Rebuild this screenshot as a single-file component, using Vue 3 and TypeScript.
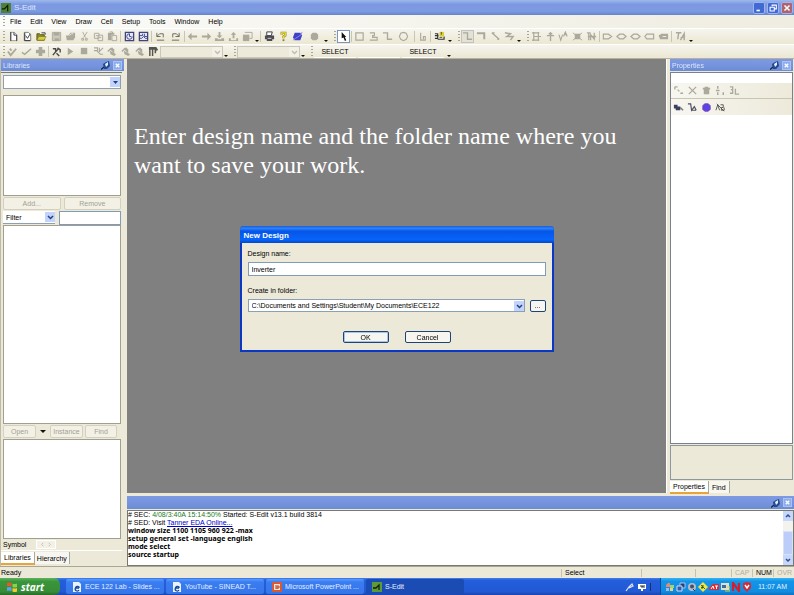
<script setup lang="ts">
import { ref } from 'vue'

type Shape = { d: string; f?: string; s?: string; w?: number }
type Part =
  | { kind: 'icons'; width: number; names: string[] }
  | { kind: 'sep' | 'grip' | 'more'; width: number }
  | { kind: 'combo'; width: number; label: string }
  | { kind: 'text'; width: number; text: string }

const g = '#aaa99b'
const k = '#33333f'
const y = '#d8cf3c'
const b = '#3f3fc8'

const icons: Record<string, Shape[]> = {
  newFile: [{ d: 'M3 1.5H7L9.5 4V10.500H3Z', f: '#fff', s: '#99998c' }, { d: 'M3 1V11M6.500 1.500V4.500H9.500V11', s: k }],
  newCell: [{ d: 'M2.500 1.500H7L9.500 4V10.500H2.500Z', f: '#fff', s: '#77776c' }, { d: 'M3 2V10.500H9M4 5L6 8L9 3', s: k }],
  open: [{ d: 'M1 3H4L5 4H9V10H1Z', f: '#8f8a2b', s: '#55531d' }, { d: 'M3 6H11L9 10H1Z', f: y, s: '#6f6b22', w: 0.6 }, { d: 'M6 2H10V4', s: k }],
  save: [{ d: 'M1.500 1.500H10.500V10.500H1.500Z', f: '#c9c8b9', s: g }, { d: 'M3 2H9V5H3ZM4 8H9V11H4Z', f: g }],
  saveAll: [{ d: 'M1 5H4L6 2H11V7L9 10H2Z', f: g }, { d: 'M5 5L7 3H9', s: '#eee' }],
  cut: [{ d: 'M4 1L7 7M9 1L5 7M3 8H5V10H3ZM7 8H9V10H7Z', s: g }],
  copy: [{ d: 'M1.500 2.500H6.500V8H1.500ZM5.500 4.500H10.500V10.500H5.500Z', s: g }, { d: 'M3 5H5M7 7H9', s: g }],
  paste: [{ d: 'M1 2H8V4H5V10H1Z', f: g }, { d: 'M5.500 5H10.500V10.500H5.500ZM3 1H6V3', s: g }],
  design: [{ d: 'M1.500 1.500H10.500V10.500H1.500Z', f: '#e5e8ff', s: '#414579', w: 1.4 }, { d: 'M6 3A3 3 0 1 0 9 6M6 3V6H8', s: '#414579' }],
  schem: [{ d: 'M1.500 1.500H10.500V10.500H1.500Z', f: '#e5e8ff', s: '#414579', w: 1.400 }, { d: 'M2 5H5V3M7 3V6H10M2 8H4L6 6L8 8H10', s: '#414579' }],
  undo: [{ d: 'M2 2V6H6M2 6L5 3H9V7M2 10H10', s: '#666653' }],
  redo: [{ d: 'M10 2V6H6M10 6L7 3H3V7M2 10H10', s: '#666653' }],
  left: [{ d: 'M1 6L5 2V5H11V7H5V10Z', f: g }],
  right: [{ d: 'M11 6L7 2V5H1V7H7V10Z', f: g }],
  push: [{ d: 'M5 1H7V5H9L6 8L3 5H5ZM1 8H4V9H8V8H11V11H1Z', f: g }],
  pop: [{ d: 'M6 1L9 4H7V8H5V4H3ZM1 8H3V10H9V8H11V11H1Z', f: g }],
  view: [{ d: 'M3 1.500H11V8H8', s: g }, { d: 'M1 4H8V11H1Z', f: g }],
  print: [{ d: 'M3 1H9L8 5H3Z', f: '#fff', s: k }, { d: 'M1 5H11V9H9V11H3V9H1Z', f: '#4b4b50' }, { d: 'M4 8H8', s: '#ddd' }],
  help: [{ d: 'M4 4V2H8V5L6 6V8', s: '#8a8322', w: 2.400 }, { d: 'M4 4V2H8V5L6 6V8', s: '#e9df38', w: 1.300 }, { d: 'M5 9H7V11H5Z', f: '#8a8322' }],
  planet: [{ d: 'M3 2H9L11 5L9 10H3L1 7Z', f: b }, { d: 'M1 10L4 8L10 4L11 1', s: '#8f90e8' }],
  dot: [{ d: 'M4 2H8L10 4V8L8 10H4L2 8V4Z', f: g }],
  arrow: [{ d: 'M4 1V8L6 7L7.500 11L9 10L7.500 6.500H9Z', f: '#111' }],
  box: [{ d: 'M2 2H10V10H2Z', s: g, w: 1.300 }],
  poly: [{ d: 'M2 2H7V5H5V7H10V10H2', s: g, w: 1.200 }],
  wire: [{ d: 'M1 2H6V9H11', s: g, w: 1.500 }],
  circle: [{ d: 'M6 1.500L9 2.500L10.500 6L9 9L6 10.500L3 9L1.500 6L3 2.500Z', s: g, w: 1.200 }],
  label: [{ d: 'M4 2V10H9V6H7V9', s: g, w: 1.200 }],
  move: [{ d: 'M1 3H4V8H1M1 5H5M4 9H11V6', s: k, w: 1.300 }, { d: 'M6 1H11V6H6Z', f: y }, { d: 'M8 1V4M6 7H9', s: '#50501d' }],
  wireBold: [{ d: 'M1 2.500H9V9', s: g, w: 2.200 }],
  diag: [{ d: 'M2 2L10 9M2 2H5M8 9H10', s: g, w: 1.500 }],
  zig: [{ d: 'M1 2L7 3L3 6H10L7 10', s: g, w: 1.600 }],
  net: [{ d: 'M3 1V11M8 1V11M1 2H9M1 10H9M3 6H11', s: g, w: 1.300 }],
  pin: [{ d: 'M6 1V11M2 5H10M4 3H8', s: g, w: 1.500 }],
  va: [{ d: 'M1 4L3 10L5 4M6 6L8 1L10 6M7 4H10', s: g, w: 1.200 }],
  spark: [{ d: 'M3 3H9V9H3Z', f: g }, { d: 'M1 2L11 10M11 2L1 10', s: g }],
  text: [{ d: 'M1 2H5M3 2V10M5 10V4L9 9V2M2 6H11', s: g, w: 1.400 }],
  portIn: [{ d: 'M1.500 3.500H7L10.500 6L7 8.500H1.500Z', s: g, w: 1.300 }],
  portDia: [{ d: 'M1 6L4 3.500H8L11 6L8 8.500H4Z', s: g, w: 1.300 }],
  portOut: [{ d: 'M3 3.500H10.500V8.500H3L1 6Z', s: g, w: 1.300 }],
  portFull: [{ d: 'M1 4H3V3H11V9H2V7H1Z', f: g }, { d: 'M5 6H9', s: '#eee' }],
  ta: [{ d: 'M1 2H7M4 2L3 9M6 10L10 3V10M6 8L11 5', s: g, w: 1.600 }],
  check: [{ d: 'M1 6L4 10L10 3M3 3L5 5', s: g, w: 2 }],
  check2: [{ d: 'M1 7L4 9L11 3', s: g, w: 1.600 }],
  plus: [{ d: 'M4 1H8V4H11V8H8V11H4V8H1V4H4Z', f: g }],
  probe: [{ d: 'M2 10L8 3M2 3H5V6M7 2L10 4V7M6 8L9 11', s: '#4a4a43', w: 1.500 }],
  play: [{ d: 'M3 2L9 6L3 10Z', f: g }],
  stop: [{ d: 'M2 2H9V9H2Z', f: g }],
  tree: [{ d: 'M1 2H5V5H1M4 5L8 9H11M7 2V6L11 2', s: g, w: 1.200 }],
  brush: [{ d: 'M2 6L5 3L9 7M6 2L9 5', s: g, w: 1.500 }, { d: 'M4 5L11 9L9 11L5 9Z', f: g }],
  bars: [{ d: 'M1 1H9L11 4L9 6V4H1Z', f: '#55554d' }, { d: 'M2 2V11M5 2V11M8 3V8', s: '#55554d', w: 1.600 }],
  cross: [{ d: 'M2 2L10 10M10 2L2 10', s: g, w: 1.400 }],
  add: [{ d: 'M2 2H5M2 2V5M5 5L7 7M8 9H11', s: g, w: 1.400 }],
  trash: [{ d: 'M4 2H8V3H10V5H9V10H3V5H2V3H4Z', f: g }],
  list: [{ d: 'M3 1V4M1 6H5M3 8V11M9 8V11', s: g, w: 1.600 }],
  list2: [{ d: 'M1 2H4V5H2M4 5V9H1M7 4V10H11', s: g, w: 1.400 }],
  gear: [{ d: 'M1 3H5V5H8V9H3V7H1Z', f: '#3b3f60' }, { d: 'M8 6L11 9', s: '#777', w: 1.500 }],
  branch: [{ d: 'M1 2H4L5 9L8 5L10 9M5 9H10', s: '#4e5060', w: 1.300 }],
  ball: [{ d: 'M4 2H8L10 4V8L8 10H4L2 8V4Z', f: '#5a45e4', s: '#7b3bc0' }],
  ab: [{ d: 'M1 9L3 3L5 9M6 3H9V6H7V9H10V6M2 2L10 10', s: '#55554d' }],
}

const ic = (width: number, ...names: string[]): Part => ({ kind: 'icons', width, names })
const sep: Part = { kind: 'sep', width: 3 }
const grip: Part = { kind: 'grip', width: 6 }
const more: Part = { kind: 'more', width: 8 }

const mainBar: Part[] = [
  grip, ic(72, 'newFile', 'newCell', 'open', 'save', 'saveAll'), ic(41, 'cut', 'copy', 'paste'),
  sep, ic(28, 'design', 'schem'), sep, ic(30, 'undo', 'redo'), sep,
  ic(68, 'left', 'right', 'push', 'pop', 'view'), { kind: 'more', width: 5 },
  sep, ic(43, 'print', 'help', 'planet'), ic(18, 'dot'), more,
  grip, ic(13, 'arrow'), sep, ic(41, 'box', 'poly', 'wire'), ic(19, 'circle'),
  sep, ic(13, 'label'), sep, ic(15, 'move'), more,
  grip, ic(55, 'wire', 'wireBold', 'diag', 'zig'), more,
  grip, ic(68, 'net', 'pin', 'va', 'spark', 'text'),
  sep, ic(69, 'portIn', 'portDia', 'portDia', 'portOut', 'portFull'), sep, ic(15, 'ta'), more,
]

const simBar: Part[] = [
  grip, ic(41, 'check', 'check2', 'plus'), sep,
  ic(110, 'probe', 'play', 'stop', 'tree', 'brush', 'brush', 'brush', 'bars'),
  { kind: 'combo', width: 63, label: 'Simulation' }, more,
  grip, { kind: 'combo', width: 63, label: 'Result' }, more,
  grip, { kind: 'text', width: 44, text: 'SELECT' }, { kind: 'text', width: 44, text: '' },
  { kind: 'text', width: 44, text: 'SELECT' }, more,
]

const menus = ['File', 'Edit', 'View', 'Draw', 'Cell', 'Setup', 'Tools', 'Window', 'Help']
const propTools = [['add', 'cross', 'trash', 'list', 'list2'], ['gear', 'branch', 'ball', 'ab']]
const tasks = [
  { icon: 'ie', text: 'ECE 122  Lab - Slides ...' },
  { icon: 'ie', text: 'YouTube - SINEAD T...' },
  { icon: 'ppt', text: 'Microsoft PowerPoint ...' },
  { icon: 'sedit', text: 'S-Edit' },
]

const designName = ref('Inverter')
const folder = ref('C:\\Documents and Settings\\Student\\My Documents\\ECE122')
const toolState = (n: string, i: number, w: number) => (n === 'arrow' ? 'on' : n === 'wire' && i === 0 && w === 55 ? 'held' : '')
</script>

<template>
  <div class="app">
    <header class="title">
      <svg class="logo" viewBox="0 0 12 12"><rect width="12" height="12" fill="#4f8130" /><path d="M1 7H4L8 3V10" stroke="#0d1c0a" stroke-width="1.5" fill="none" /></svg>
      <span class="name">S-Edit</span>
      <button class="win" aria-label="Minimize"><svg viewBox="0 0 12 12"><path d="M3 9H7" stroke="#fff" stroke-width="2" /></svg></button>
      <button class="win" aria-label="Restore"><svg viewBox="0 0 12 12"><path d="M5 4V2.500H10V7H8M2.500 5H7.500V9.500H2.500Z" stroke="#fff" stroke-width="1.300" fill="none" /></svg></button>
      <button class="win close" aria-label="Close"><svg viewBox="0 0 12 12"><path d="M3 3L9 9M9 3L3 9" stroke="#fff" stroke-width="1.800" /></svg></button>
    </header>

    <nav class="menu">
      <i class="dots"></i>
      <button v-for="m in menus" :key="m">{{ m }}</button>
    </nav>

    <div v-for="(bar, bi) in [mainBar, simBar]" :key="bi" class="bar">
      <div v-for="(p, pi) in bar" :key="pi" :class="['part', p.kind]" :style="{ width: p.width + 'px' }">
        <template v-if="p.kind === 'icons'">
          <button v-for="(n, ni) in p.names" :key="ni" :class="['tool', toolState(n, ni, p.width)]" :aria-label="n">
            <svg viewBox="0 0 12 12">
              <path v-for="(s, si) in icons[n]" :key="si" :d="s.d" :fill="s.f || 'none'" :stroke="s.s || 'none'" :stroke-width="s.w || 1" />
            </svg>
          </button>
        </template>
        <i v-else-if="p.kind === 'grip'" class="dots"></i>
        <svg v-else-if="p.kind === 'more'" class="tri" viewBox="0 0 4 2"><path d="M0 0H4L2 2Z" fill="#111" /></svg>
        <div v-else-if="p.kind === 'combo'" class="drop"><select disabled :aria-label="p.label"></select><svg viewBox="0 0 10 10"><path d="M3 4L5.500 6.500L8 4" stroke="#bdbbae" stroke-width="1.300" fill="none" /></svg></div>
        <button v-else-if="p.kind === 'text'" class="sel">{{ p.text }}</button>
      </div>
    </div>

    <main class="work">
      <aside class="left">
        <div class="head"><span>Libraries</span>
          <svg class="pinicon" viewBox="0 0 10 10"><path d="M0 9.500L3 7" stroke="#123" stroke-width="1.200" /><path d="M2 4L5 2L8 1L9 6L6 9H3Z" fill="#24498f" /><path d="M4 4L7 2V5L5 7Z" fill="#e3f0ff" /></svg>
          <button class="x" aria-label="Close libraries"><svg viewBox="0 0 8 8"><path d="M2 2L6 6M6 2L2 6" stroke="#fff" stroke-width="1.500" /></svg></button>
        </div>
        <div class="lbody">
          <div class="drop"><select aria-label="Library"></select><svg viewBox="0 0 10 10"><path d="M3 4H8L5.500 7Z" fill="#24417f" /></svg></div>
          <div class="list lib"></div>
          <div class="pair"><button disabled>Add...</button><button disabled>Remove</button></div>
          <div class="filter">
            <div class="drop"><select aria-label="Filter type"><option>Filter</option></select><svg viewBox="0 0 10 10"><path d="M3 4L5.500 6.500L8 4" stroke="#24417f" stroke-width="1.500" fill="none" /></svg></div>
            <input aria-label="Filter text" />
          </div>
          <div class="list cells"></div>
          <div class="trio">
            <button disabled>Open</button>
            <svg class="tri big" viewBox="0 0 4 2"><path d="M0 0H4L2 2Z" fill="#111" /></svg>
            <button disabled>Instance</button><button disabled>Find</button>
          </div>
          <div class="list preview"></div>
          <div class="symbol"><span>Symbol</span><button disabled aria-label="Previous and next"><svg viewBox="0 0 18 8"><path d="M6 2L4 4L6 6M12 2L14 4L12 6" stroke="#bbb" fill="none" /></svg></button></div>
        </div>
        <div class="tabs"><button class="act">Libraries</button><button>Hierarchy</button></div>
      </aside>

      <section class="canvas">
        <h1>Enter design name and the folder name where you want to save your work.</h1>
        <form class="dialog" @submit.prevent>
          <h2>New Design</h2>
          <div class="dbody">
            <label for="dn">Design name:</label>
            <div class="field"><input id="dn" v-model="designName" autofocus /></div>
            <label for="cf">Create in folder:</label>
            <div class="frow">
              <div class="drop"><select id="cf" v-model="folder"><option>{{ folder }}</option></select><svg viewBox="0 0 10 10"><path d="M3 4L5.500 6.500L8 4" stroke="#24417f" stroke-width="1.500" fill="none" /></svg></div>
              <button class="xp" type="button">...</button>
            </div>
            <div class="acts"><button class="xp def">OK</button><button class="xp" type="button">Cancel</button></div>
          </div>
        </form>
      </section>

      <aside class="right">
        <div class="head"><span>Properties</span>
          <svg class="pinicon" viewBox="0 0 10 10"><path d="M0 9.500L3 7" stroke="#123" stroke-width="1.200" /><path d="M2 4L5 2L8 1L9 6L6 9H3Z" fill="#24498f" /><path d="M4 4L7 2V5L5 7Z" fill="#e3f0ff" /></svg>
          <button class="x" aria-label="Close properties"><svg viewBox="0 0 8 8"><path d="M2 2L6 6M6 2L2 6" stroke="#fff" stroke-width="1.500" /></svg></button>
        </div>
        <div class="pframe">
          <div class="pname"></div>
          <div v-for="(row, ri) in propTools" :key="ri" class="prow">
            <button v-for="n in row" :key="n" class="tool" :aria-label="n"><svg viewBox="0 0 12 12"><path v-for="(s, si) in icons[n]" :key="si" :d="s.d" :fill="s.f || 'none'" :stroke="s.s || 'none'" :stroke-width="s.w || 1" /></svg></button>
          </div>
          <div class="pgrid"></div>
        </div>
        <div class="pdesc"></div>
        <div class="tabs"><button class="act">Properties</button><button>Find</button></div>
      </aside>

      <section class="console">
        <div class="head"><span></span>
          <svg class="pinicon" viewBox="0 0 10 10"><path d="M0 9.500L3 7" stroke="#123" stroke-width="1.200" /><path d="M2 4L5 2L8 1L9 6L6 9H3Z" fill="#24498f" /><path d="M4 4L7 2V5L5 7Z" fill="#e3f0ff" /></svg>
          <button class="x" aria-label="Close console"><svg viewBox="0 0 8 8"><path d="M2 2L6 6M6 2L2 6" stroke="#fff" stroke-width="1.500" /></svg></button>
        </div>
        <div class="log">
          <div class="lines">
            <p># SEC: <em>4/08/3:40A 15:14:50%</em> Started: S-Edit v13.1 build 3814</p>
            <p># SED: Visit <a href="#">Tanner EDA Online...</a></p>
            <p class="cmd">window size 1100 1105 960 922 -max</p>
            <p class="cmd">setup general set -language english</p>
            <p class="cmd">mode select</p>
            <p class="cmd">source startup</p>
          </div>
          <div class="scroll">
            <svg viewBox="0 0 10 10"><path d="M3 6L5 4L7 6" stroke="#33508c" stroke-width="1.500" fill="none" /></svg>
            <div class="track"><i></i></div>
            <svg viewBox="0 0 10 10"><path d="M3 4L5 6L7 4" stroke="#33508c" stroke-width="1.500" fill="none" /></svg>
          </div>
        </div>
      </section>
    </main>

    <footer class="status"><span class="ready">Ready</span><span class="mode">Select</span><span class="gap"></span><span class="gap2"></span><span class="off">CAP</span><span>NUM</span><span class="off">OVR</span></footer>

    <div class="task">
      <button class="start">
        <svg viewBox="0 0 12 12"><path d="M1 2Q3 1 5.500 2V5.500Q3 4.500 1 5.500Z" fill="#e8562a" /><path d="M6.500 2.500Q9 3.500 11 2.500V6Q9 7 6.500 6Z" fill="#8fd04a" /><path d="M1 6.500Q3 5.500 5.500 6.500V10Q3 9 1 10Z" fill="#5aa2ef" /><path d="M6.500 7Q9 8 11 7V10.500Q9 11.500 6.500 10.500Z" fill="#f6c935" /></svg>
        <span>start</span>
      </button>
      <button v-for="(t, i) in tasks" :key="i" :class="['app-btn', { cur: t.icon === 'sedit' }]">
        <svg v-if="t.icon === 'ie'" viewBox="0 0 10 10"><path d="M1 0H7L9 2V10H1Z" fill="#e9f2ff" /><path d="M7 6H3.500A2 2 0 0 1 7 5V6M3.500 6A2 2 0 0 0 7 8" stroke="#174a9c" stroke-width="1.300" fill="none" /></svg>
        <svg v-else-if="t.icon === 'ppt'" viewBox="0 0 10 10"><rect width="10" height="10" fill="#d65a35" /><path d="M2 2H8V8H2Z" fill="#f7e5da" /><path d="M3 4H7V6H3M5 4V7" stroke="#c43e1c" fill="none" /></svg>
        <svg v-else viewBox="0 0 10 10"><rect width="10" height="10" fill="#5c9b38" /><path d="M1 6H4L7 3V8" stroke="#10200c" stroke-width="1.300" fill="none" /></svg>
        <span>{{ t.text }}</span>
      </button>
      <div class="quick">
        <svg viewBox="0 0 10 10"><path d="M2 9L5 5L8 2L9 4L5 6" stroke="#dde6f7" stroke-width="1.200" fill="#444c62" /></svg>
        <svg viewBox="0 0 10 10"><path d="M1 2H9V7H6V9H4V7H1Z" fill="#fff" /><path d="M3 4H6V5H4M7 3V6" stroke="#24303f" fill="none" /></svg>
        <i></i>
      </div>
      <div class="tray">
        <svg viewBox="0 0 10 10"><path d="M3 1H5V5H1V3Z" fill="#e98b6a" /><path d="M5 3H9V6H5Z" fill="#9fd27c" /><path d="M1 6H4V9H1Z" fill="#9fb8ef" /><path d="M5 6H8V9H5Z" fill="#e7d57a" /></svg>
        <svg viewBox="0 0 10 10"><path d="M4 1H9V6H4Z" fill="#27407c" stroke="#a8c6ef" /><path d="M1 4H6V9H1Z" fill="#345ca8" stroke="#c9dcf6" /></svg>
        <svg viewBox="0 0 10 10"><circle cx="5" cy="5" r="4" fill="#b6bcc6" /><circle cx="5" cy="4.500" r="2" fill="#41506b" /><path d="M6 7L8 9" stroke="#333" /></svg>
        <svg viewBox="0 0 10 10"><path d="M5 0L10 5L5 10L0 5Z" fill="#f2e544" /><path d="M3 3L7 7M5 3V6H3" stroke="#3a6b2b" /></svg>
        <svg viewBox="0 0 10 10"><path d="M0 6L4 2H10V8H0Z" fill="#dc2a37" /><path d="M2 7L4 4L5 7M6 4H9M7.500 4V7" stroke="#fff" fill="none" /></svg>
        <svg viewBox="0 0 10 10"><path d="M1 1H9V8H1Z" fill="#dfe2c5" /><path d="M2 3H6V6H2Z" fill="#4069a8" /><path d="M7 5H10V9H5" stroke="#d8cf3c" fill="none" /></svg>
        <svg viewBox="0 0 10 10"><path d="M2 9V1L8 9V1" stroke="#d0202d" stroke-width="2.200" fill="none" /></svg>
        <svg viewBox="0 0 10 10"><path d="M1 1L5 0L9 1V6L5 10L1 6Z" fill="#cf2b3a" /><path d="M3 3L5 6L7 3" stroke="#fff" stroke-width="1.400" fill="none" /></svg>
        <time>11:07 AM</time>
      </div>
    </div>
  </div>
</template>

<style>
body { margin: 0; }
</style>

<style scoped>
* { box-sizing: border-box; }
.app { display: flex; flex-direction: column; min-height: 100vh; overflow: hidden; background: #ece9d8; color: #000; font: 7px/9px "Liberation Sans", sans-serif; }
button, input, select { font: inherit; color: inherit; margin: 0; padding: 0; border: 0; background: none; border-radius: 0; appearance: none; min-width: 0; outline: 0; }
svg { display: block; flex: none; }
p, h1, h2 { margin: 0; }
.title { display: flex; align-items: center; height: 15px; padding: 0 1px; gap: 2px; background: linear-gradient(#9db9ee, #7b98e0 30%, #7d9be3 75%, #6483c8); }
.logo { width: 10px; height: 10px; }
.name { flex: 1; color: #dfe8fb; font-size: 8px; padding-left: 1px; }
.win { width: 12px; height: 12px; background: #4169d4; border: 1px solid #9db4ee; border-radius: 2px; }
.win svg { width: 10px; height: 10px; }
.close { background: #b1636d; }
.menu { display: flex; align-items: center; height: 13px; gap: 9px; padding-left: 3px; background: linear-gradient(90deg, #fbfbf9, #efede1); }
.menu button { height: 11px; }
.dots { width: 2px; height: 11px; background: repeating-linear-gradient(#a9a794 0 1px, transparent 1px 3px); }
.menu .dots { margin-right: -4px; }
.bar { display: flex; align-items: center; height: 16px; background: linear-gradient(#f6f5ee, #ebe7d2); border-top: 1px solid #fff; }
.bar + .bar { height: 15px; border-bottom: 1px solid #b5b19c; }
.part { display: flex; align-items: center; height: 13px; flex: none; }
.icons { justify-content: space-around; }
.part .dots { margin-left: 3px; }
.sep { justify-content: center; }
.sep::before { content: ""; width: 1px; height: 11px; background: #c8c5b0; }
.tool { width: 13px; height: 13px; display: flex; align-items: center; justify-content: center; }
.tool svg { width: 11px; height: 11px; }
.tool.on { background: #fff; border: 1px solid #7997bd; }
.tool.held { background: #e4e2d6; border: 1px solid #c3c2bd; }
.tri { width: 4px; height: 2px; margin: 8px 0 0 1px; }
.drop { display: flex; align-items: center; height: 14px; background: #fff; border: 1px solid #8ba0b2; }
.drop select { flex: 1; height: 100%; padding-left: 3px; }
.drop svg { width: 10px; height: 10px; background: #c2d3fc; }
.combo .drop { width: 100%; height: 12px; border-color: #c9c7ba; background: #edeadb; }
.combo .drop svg { background: #f3f1e6; }
.sel { width: 42px; height: 13px; border-bottom: 1px solid #fff; }
.work { flex: 1; display: grid; grid-template-columns: 124px minmax(0, 1fr) 124px; grid-template-rows: minmax(0, 1fr) 71px; column-gap: 3px; }
.head { display: flex; align-items: center; flex: none; height: 12px; padding: 0 2px; gap: 2px; background: linear-gradient(#7d9ae2, #7593dd 60%, #6c8bd5); color: #dbe5fa; }
.head span { flex: 1; }
.pinicon { width: 10px; height: 10px; }
.x { width: 9px; height: 9px; background: #8caceb; border: 1px solid #a9c2f1; }
.x svg { width: 7px; height: 7px; }
.left { grid-row: 1 / 3; display: flex; flex-direction: column; border-left: 1px solid #bfbba6; }
.lbody { flex: 1; display: flex; flex-direction: column; margin: 1px 2px 0 0; padding: 2px 1px 0 2px; border-top: 1px solid #77786f; border-bottom: 1px solid #fff; }
.list { background: #fff; border: 1px solid #a09f90; }
.lib { height: 101px; margin-top: 6px; }
.pair { display: grid; grid-template-columns: 1fr 1fr; gap: 3px; padding: 1px 0; }
.pair button, .trio button { height: 13px; color: #a2a191; background: #f3f1e6; border: 1px solid #d3d0bf; border-radius: 2px; }
.filter { display: grid; grid-template-columns: 52px 1fr; gap: 4px; }
.filter .drop { height: 13px; border-width: 0 0 1px; }
.filter input { height: 14px; width: 100%; background: #fff; border: 1px solid #7f9db9; }
.cells { flex: 1; }
.trio { display: grid; grid-template-columns: 33px 14px 33px 34px; padding: 1px 0; align-items: center; }
.trio button:last-child { margin-left: 2px; }
.tri.big { width: 6px; height: 3px; margin: 0 0 0 4px; }
.preview { height: 100px; }
.symbol { display: flex; align-items: center; height: 11px; gap: 10px; }
.symbol button { background: #f3f1e6; border: 1px solid #fff; }
.symbol svg { width: 18px; height: 7px; }
.tabs { display: flex; height: 15px; flex: none; align-items: flex-start; padding-top: 1px; }
.tabs button { height: 12px; padding: 0 3px; background: #f7f6f0; border-right: 1px solid #aaa897; }
.tabs .act { height: 13px; background: #fff; border-bottom: 2px solid #e8a33a; }
.left .tabs button { padding: 0 2px; }
.left .tabs .act { padding: 0 3px; }
.canvas { display: flex; flex-direction: column; background: #808080; padding: 63px 7px 0; border-right: 1px solid #fff; margin-bottom: 2px; }
h1 { color: #fff; font: 400 24px/29px "Liberation Serif", serif; padding-right: 30px; }
.dialog { align-self: center; width: 314px; margin-top: 46px; border: 2px solid #0a38c4; border-top: 0; background: #ece9d8; border-radius: 4px 4px 0 0; }
h2 { height: 17px; margin: 0 -2px; padding: 5px 4px 0; border-radius: 4px 4px 0 0; background: linear-gradient(#1b5bd8, #2b83fb 14%, #0655e6 30%, #0764fa 80%, #0347c9); color: #fff; font-size: 8px; line-height: 9px; font-weight: 700; }
.dbody { display: flex; flex-direction: column; padding: 6px 6px 7px; }
.dbody label { height: 9px; }
.field { display: flex; margin: 4px 0 10px; }
.field input { flex: 1; height: 14px; padding: 0 3px; background: #fff; border: 1px solid #7f9db9; }
.frow { display: flex; gap: 5px; align-items: center; margin: 4px 0 19px; }
.frow .drop { width: 277px; height: 13px; }
.xp { height: 12px; background: #f6f5f0; border: 1px solid #1c4474; border-radius: 2px; }
.frow .xp { width: 16px; }
.acts { display: flex; justify-content: center; gap: 16px; }
.acts .xp { width: 46px; }
.def { box-shadow: inset 0 0 0 1px #a9c3ee; }
.right { display: flex; flex-direction: column; padding-right: 1px; }
.pframe { flex: 1; display: flex; flex-direction: column; margin-top: 1px; border: 1px solid #77828c; background: #fff; }
.pname { height: 10px; }
.prow { display: flex; height: 15px; align-items: center; background: linear-gradient(90deg, #f7f6f0, #edeadb); padding-left: 1px; gap: 1px; }
.prow + .prow { border-top: 1px solid #c8c5b0; height: 17px; }
.pdesc { height: 35px; margin-top: 1px; border: 1px solid #8b989c; }
.console { grid-column: 2 / 4; display: flex; flex-direction: column; padding-top: 1px; }
.console .head { height: 13px; }
.log { flex: 1; display: flex; margin-top: 1px; background: #fff; border: 1px solid #77786f; }
.lines { flex: 1; font-size: 7px; line-height: 8px; }
.lines em { font-style: normal; color: #217a21; }
.lines a { color: #00c; }
.cmd { font-family: "Noto Sans", "Liberation Sans", sans-serif; font-weight: 700; }
.scroll { display: flex; flex-direction: column; width: 10px; background: #f3f2ec; }
.scroll svg { width: 10px; height: 10px; background: #c7d6fb; }
.track { flex: 1; display: flex; align-items: flex-end; }
.track i { flex: 1; height: 24px; background: #bccdf9; border: 1px solid #d6e1fc; }
.status { display: flex; align-items: center; height: 12px; padding-left: 1px; border-top: 1px solid #a9a691; }
.status span { height: 8px; line-height: 8px; width: 21px; padding: 0 3px; border-left: 1px solid #c5c2ae; }
.status .ready { flex: 1; border: 0; padding: 0; }
.status .mode { width: 80px; }
.status .gap { width: 54px; }
.status .gap2 { width: 36px; }
.off { color: #b0ae9e; }
.task { display: flex; height: 17px; align-items: stretch; background: linear-gradient(#3f80ee, #245edb 14%, #2259d4 80%, #1a46ad); color: #fff; }
.start { display: flex; align-items: center; gap: 3px; width: 60px; padding-left: 6px; margin-right: 6px; background: linear-gradient(#5fb25f, #3a963a 20%, #378c37 80%, #276b27); border-radius: 0 6px 6px 0; font: italic 700 10px/12px "Open Sans", "Noto Sans", sans-serif; color: #fff; }
.start svg { width: 12px; height: 12px; }
.app-btn { display: flex; align-items: center; gap: 3px; width: 98px; margin: 1px 2px 1px 0; padding-left: 6px; background: linear-gradient(#5a9bff, #3a7df0 20%, #3575ea); border-radius: 2px; white-space: nowrap; overflow: hidden; color: #e6eeff; }
.app-btn.cur { background: #1b4cb4; }
.app-btn svg { width: 10px; height: 10px; }
.quick { display: flex; flex: 1; align-items: center; justify-content: flex-end; gap: 3px; padding-right: 9px; }
.quick svg { width: 10px; height: 10px; }
.quick i { width: 1px; height: 8px; background: #17306d; }
.tray { display: flex; align-items: center; gap: 1px; padding: 0 7px 0 4px; background: linear-gradient(#30b5f5, #1494e8 20%, #118ce0 80%, #0d6fc0); border-left: 1px solid #0a4aa0; }
.tray svg { width: 10px; height: 10px; }
.tray time { margin-left: 5px; color: #e0f0ff; white-space: nowrap; }
</style>
